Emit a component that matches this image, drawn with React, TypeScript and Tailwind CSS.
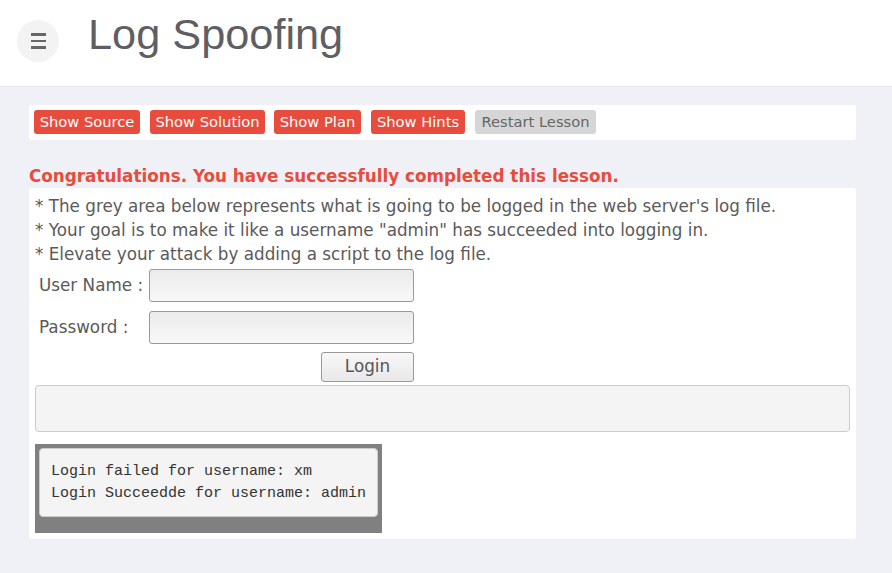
export default function App() {
  const btn = "h-6 rounded-[3px] text-[14.7px] leading-6 text-white bg-[#e74c3c] text-center whitespace-nowrap";
  return (
    <div className="min-h-[573px] bg-[#f0f1f6] font-['DejaVu_Sans',sans-serif] text-[#555]">
      <header className="h-[87px] bg-white border-b border-[#e2e3e8] flex items-start">
        <div className="ml-[17px] mt-[20px] w-[42px] h-[42px] rounded-full bg-[#f3f3f3] flex flex-col items-center justify-center gap-[4px]">
          <div className="w-[15px] h-[2.5px] bg-[#666]" />
          <div className="w-[15px] h-[2.5px] bg-[#666]" />
          <div className="w-[15px] h-[2.5px] bg-[#666]" />
        </div>
        <h1 className="ml-[29px] mt-[7px] text-[43.3px] leading-[54px] font-['Liberation_Sans',Arial,sans-serif] text-[#5f5f63]">Log Spoofing</h1>
      </header>
      <div className="mx-[29px] w-[827px] mt-[18px] bg-white rounded-[3px] h-[35px] flex items-start pt-[5px] px-[5px]">
        <button className={`${btn} w-[106px]`}>Show Source</button>
        <button className={`${btn} w-[115px] ml-[10px]`}>Show Solution</button>
        <button className={`${btn} w-[87px] ml-[9px]`}>Show Plan</button>
        <button className={`${btn} w-[94px] ml-[10px]`}>Show Hints</button>
        <button className="h-6 w-[121px] ml-[10px] rounded-[3px] text-[14.7px] leading-6 text-[#666] bg-[#d6d6d6] text-center whitespace-nowrap">Restart Lesson</button>
      </div>
      <div className="ml-[29px] mt-[25px] text-[16.8px] leading-[23px] font-bold text-[#e74c3c]">Congratulations. You have successfully completed this lesson.</div>
      <div className="mx-[29px] w-[827px] bg-white rounded-[3px] h-[351px] pt-[6px] px-[6px]">
        <div className="text-[16.8px] leading-6 text-[#5a5a5a]">
          <div>* The grey area below represents what is going to be logged in the web server's log file.</div>
          <div>* Your goal is to make it like a username "admin" has succeeded into logging in.</div>
          <div>* Elevate your attack by adding a script to the log file.</div>
        </div>
        <div className="flex items-center mt-[3px] h-[33px]">
          <span className="w-[114px] pl-[4px] text-[16.8px] text-[#5a5a5a]">User Name :</span>
          <div className="w-[265px] h-[33px] border border-[#999] rounded-[3px] bg-gradient-to-b from-[#ebebeb] to-[#f8f8f8]" />
        </div>
        <div className="flex items-center mt-[9px] h-[33px]">
          <span className="w-[114px] pl-[4px] text-[16.8px] text-[#5a5a5a]">Password :</span>
          <div className="w-[265px] h-[33px] border border-[#999] rounded-[3px] bg-gradient-to-b from-[#ebebeb] to-[#f8f8f8]" />
        </div>
        <div className="flex mt-[8px]">
          <button className="ml-[286px] w-[93px] h-[30px] border border-[#999] rounded-[3px] bg-gradient-to-b from-[#f8f8f8] to-[#e8e8e8] text-[16.8px] text-[#555]">Login</button>
        </div>
        <div className="mt-[3px] w-[815px] h-[47px] bg-[#f4f4f4] border border-[#ccc] rounded-[4px]" />
        <div className="mt-[12px] w-[347px] h-[89px] bg-[#808080] pt-[4px] px-[4px]">
          <pre className="h-[69px] bg-[#f4f4f4] border border-[#ccc] rounded-[4px] px-[11px] pt-[12px] font-['Liberation_Mono',monospace] text-[15px] leading-[22px] text-[#333]">{"Login failed for username: xm\nLogin Succeedde for username: admin"}</pre>
        </div>
      </div>
    </div>
  );
}
